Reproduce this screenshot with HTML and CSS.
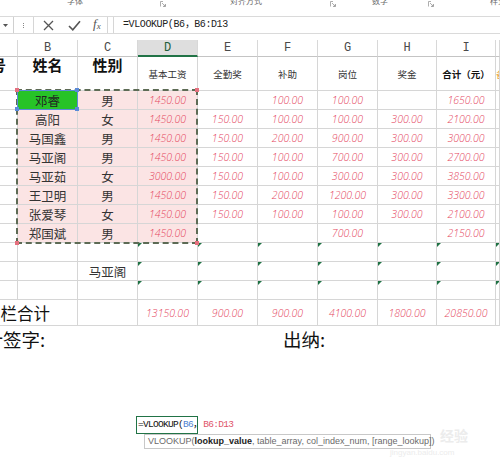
FILE: index.html
```html
<!DOCTYPE html>
<html lang="zh-CN">
<head>
<meta charset="utf-8">
<title>VLOOKUP</title>
<link rel="stylesheet" href="styles.css">
</head>
<body>
<div class="ribbon">
  <span class="rl g1">字体</span>
  <span class="lnch k1"><svg width="6" height="6" viewBox="0 0 6 6"><path d="M0.5 5.5V0.5H3M5.5 3V5.5H3M2 2L5.2 5.2M5.2 3.6V5.2H3.6" fill="none" stroke="#9a9a9a" stroke-width="0.8"/></svg></span>
  <span class="rl g2">对齐方式</span>
  <span class="lnch k2"><svg width="6" height="6" viewBox="0 0 6 6"><path d="M0.5 5.5V0.5H3M5.5 3V5.5H3M2 2L5.2 5.2M5.2 3.6V5.2H3.6" fill="none" stroke="#9a9a9a" stroke-width="0.8"/></svg></span>
  <span class="rl g3">数字</span>
  <span class="lnch k3"><svg width="6" height="6" viewBox="0 0 6 6"><path d="M0.5 5.5V0.5H3M5.5 3V5.5H3M2 2L5.2 5.2M5.2 3.6V5.2H3.6" fill="none" stroke="#9a9a9a" stroke-width="0.8"/></svg></span>
  <span class="rl g4">样式</span>
</div>

<div class="fbar">
  <div class="namebox"><svg width="5" height="3" viewBox="0 0 5 3"><path d="M0 0H5L2.5 3Z" fill="#555"/></svg></div>
  <div class="grip"><i></i><i></i><i></i></div>
  <div class="fxbox">
    <svg class="ic" width="11" height="11" viewBox="0 0 11 11"><path d="M1 1L10 10M10 1L1 10" stroke="#555" stroke-width="1.3" fill="none"/></svg>
    <svg class="ic" width="13" height="11" viewBox="0 0 13 11"><path d="M1 6L4.8 9.8L12 1.2" stroke="#555" stroke-width="1.6" fill="none"/></svg>
    <span class="fx">f<sub>x</sub></span>
  </div>
  <div class="finput">=VLOOKUP(B6，B6:D13</div>
</div>

<div class="sheet">
  <!-- column headers -->
  <div class="h"></div>
  <div class="h">B</div>
  <div class="h">C</div>
  <div class="h sel">D</div>
  <div class="h">E</div>
  <div class="h">F</div>
  <div class="h">G</div>
  <div class="h">H</div>
  <div class="h">I</div>
  <div class="h"></div>

  <!-- title row -->
  <div class="c big cut">号</div>
  <div class="c big">姓名</div>
  <div class="c big">性别</div>
  <div class="c sm">基本工资</div>
  <div class="c sm">全勤奖</div>
  <div class="c sm">补助</div>
  <div class="c sm">岗位</div>
  <div class="c sm">奖金</div>
  <div class="c sm b">合计（元）</div>
  <div class="c sm or">备</div>

  <!-- data -->
  <div class="c"></div>
  <div class="c nm green">邓睿</div>
  <div class="c pk nm">男</div>
  <div class="c pk n">1450.00</div>
  <div class="c n"></div>
  <div class="c n">100.00</div>
  <div class="c n">100.00</div>
  <div class="c n"></div>
  <div class="c n">1650.00</div>
  <div class="c"></div>

  <div class="c"></div>
  <div class="c pk nm">高阳</div>
  <div class="c pk nm">女</div>
  <div class="c pk n">1450.00</div>
  <div class="c n">150.00</div>
  <div class="c n">100.00</div>
  <div class="c n">100.00</div>
  <div class="c n">300.00</div>
  <div class="c n">2100.00</div>
  <div class="c"></div>

  <div class="c"></div>
  <div class="c pk nm">马国鑫</div>
  <div class="c pk nm">男</div>
  <div class="c pk n">1450.00</div>
  <div class="c n">150.00</div>
  <div class="c n">200.00</div>
  <div class="c n">900.00</div>
  <div class="c n">300.00</div>
  <div class="c n">3000.00</div>
  <div class="c"></div>

  <div class="c"></div>
  <div class="c pk nm">马亚阁</div>
  <div class="c pk nm">男</div>
  <div class="c pk n">1450.00</div>
  <div class="c n">150.00</div>
  <div class="c n">100.00</div>
  <div class="c n">700.00</div>
  <div class="c n">300.00</div>
  <div class="c n">2700.00</div>
  <div class="c"></div>

  <div class="c"></div>
  <div class="c pk nm">马亚茹</div>
  <div class="c pk nm">女</div>
  <div class="c pk n">3000.00</div>
  <div class="c n">150.00</div>
  <div class="c n">100.00</div>
  <div class="c n">300.00</div>
  <div class="c n">300.00</div>
  <div class="c n">3850.00</div>
  <div class="c"></div>

  <div class="c"></div>
  <div class="c pk nm">王卫明</div>
  <div class="c pk nm">男</div>
  <div class="c pk n">1450.00</div>
  <div class="c n">150.00</div>
  <div class="c n">200.00</div>
  <div class="c n">1200.00</div>
  <div class="c n">300.00</div>
  <div class="c n">3300.00</div>
  <div class="c"></div>

  <div class="c"></div>
  <div class="c pk nm">张爱琴</div>
  <div class="c pk nm">女</div>
  <div class="c pk n">1450.00</div>
  <div class="c n">150.00</div>
  <div class="c n">100.00</div>
  <div class="c n">100.00</div>
  <div class="c n">300.00</div>
  <div class="c n">2100.00</div>
  <div class="c"></div>

  <div class="c"></div>
  <div class="c pk nm">郑国斌</div>
  <div class="c pk nm">男</div>
  <div class="c pk n">1450.00</div>
  <div class="c n"></div>
  <div class="c n"></div>
  <div class="c n">700.00</div>
  <div class="c n"></div>
  <div class="c n">2150.00</div>
  <div class="c"></div>

  <!-- empty rows -->
  <div class="c"></div>
  <div class="c"></div>
  <div class="c"></div>
  <div class="c e"></div>
  <div class="c e"></div>
  <div class="c e"></div>
  <div class="c e"></div>
  <div class="c e"></div>
  <div class="c e"></div>
  <div class="c e"></div>

  <div class="c"></div>
  <div class="c"></div>
  <div class="c nm">马亚阁</div>
  <div class="c e"></div>
  <div class="c e"></div>
  <div class="c e"></div>
  <div class="c e"></div>
  <div class="c e"></div>
  <div class="c e"></div>
  <div class="c e"></div>

  <div class="c"></div>
  <div class="c"></div>
  <div class="c"></div>
  <div class="c e"></div>
  <div class="c e"></div>
  <div class="c e"></div>
  <div class="c e"></div>
  <div class="c e"></div>
  <div class="c e"></div>
  <div class="c e"></div>

  <!-- total row -->
  <div class="c total span2"><span class="tl">本栏合计</span></div>
  <div class="c"></div>
  <div class="c n">13150.00</div>
  <div class="c n">900.00</div>
  <div class="c n">900.00</div>
  <div class="c n">4100.00</div>
  <div class="c n">1800.00</div>
  <div class="c n">20850.00</div>
  <div class="c"></div>

  <!-- overlays: copy marquee and reference handles -->
  <div class="marquee"></div>
  <div class="refbox"></div>
  <span class="dot red d1"></span>
  <span class="dot red d2"></span>
  <span class="dot red d3"></span>
  <span class="dot red d4"></span>
  <span class="dot blue d5"></span>
  <span class="dot blue d6"></span>
  <span class="dot blue d7"></span>
</div>

<div class="sign">
  <div class="s1"><span class="st">会计签字:</span></div>
  <div class="s2">出纳:</div>
</div>

<div class="editor">=VLOOKUP(<span class="rb">B6</span>，<span class="rr">B6:D13</span></div>
<div class="tip">VLOOKUP(<b>lookup_value</b>, table_array, col_index_num, [range_lookup])</div>

<div class="wm">
  <span class="wt">经验</span>
  <span class="wu">jingyan.baidu.com</span>
</div>
</body>
</html>
```

FILE: styles.css
```css
* { box-sizing: border-box; margin: 0; padding: 0; }
html, body { width: 500px; height: 471px; overflow: hidden; background: #fff; }
body {
  font-family: "Noto Sans CJK SC", "Noto Sans", sans-serif;
  color: #333;
  position: relative;
}

/* ribbon group labels (cut off at top) */
.ribbon {
  height: 17px;
  border-bottom: 1px solid #dadada;
  display: flex;
  align-items: flex-start;
  overflow: hidden;
}
.rl { font-size: 8px; line-height: 10px; margin-top: -4px; color: #6a6a6a; white-space: nowrap; }
.lnch { display: block; width: 6px; height: 6px; margin-top: 1px; }
.lnch svg { display: block; }
.g1 { margin-left: 67px; }
.k1 { margin-left: 77px; }
.g2 { margin-left: 64px; }
.k2 { margin-left: 68px; }
.g3 { margin-left: 36px; }
.k3 { margin-left: 40px; }
.g4 { margin-left: 56px; }

/* formula bar */
.fbar {
  height: 17px;
  border-bottom: 1px solid #dadada;
  display: flex;
  align-items: stretch;
}
.namebox {
  width: 14px;
  border-right: 1px solid #d0d0d0;
  display: flex;
  align-items: center;
  justify-content: center;
  padding-right: 2px;
}
.namebox svg { display: block; }
.grip {
  width: 19px;
  display: flex;
  flex-direction: column;
  align-items: center;
  justify-content: center;
  gap: 1px;
}
.grip i { display: block; width: 1px; height: 1px; background: #888; }
.fxbox {
  width: 75px;
  border-left: 1px solid #d6d6d6;
  border-right: 1px solid #d6d6d6;
  display: flex;
  align-items: center;
  padding-left: 9px;
  gap: 14px;
}
.ic { display: block; }
.fx {
  font-family: "Liberation Serif", serif;
  font-style: italic;
  font-size: 13px;
  line-height: 13px;
  color: #555;
  margin-left: -2px;
}
.fx sub { font-size: 9px; vertical-align: -1px; }
.finput {
  flex: 1;
  margin-left: 5px;
  border-left: 1px solid #d6d6d6;
  padding-left: 9px;
  font-family: "Liberation Mono", monospace;
  font-size: 10px;
  letter-spacing: -0.4px;
  line-height: 16px;
  color: #222;
  white-space: nowrap;
}

/* sheet */
.sheet {
  position: relative;
  margin-top: 6px;
  display: grid;
  grid-template-columns: 18px repeat(6, 60px) 59px 59px 4px;
  grid-template-rows: 17px 34px repeat(8, 19px) 19px 19px 19px 26px;
  overflow: hidden;
}
.h {
  border-right: 1px solid #d8d8d8;
  border-bottom: 1px solid #c4c4c4;
  display: flex;
  align-items: center;
  justify-content: center;
  font-family: "Liberation Mono", monospace;
  font-size: 12px;
  color: #4a4a4a;
}
.h.sel {
  background: #dedede;
  border-bottom: 2px solid #217346;
  color: #1e5e3a;
}
.c {
  position: relative;
  border-right: 1px solid #d6d6d6;
  border-bottom: 1px solid #d6d6d6;
  display: flex;
  align-items: center;
  justify-content: center;
  white-space: nowrap;
  overflow: hidden;
}
.big {
  align-items: flex-start;
  font-size: 15px;
  line-height: 15px;
  font-weight: 700;
  color: #111;
}
.cut { justify-content: flex-end; padding-right: 11px; overflow: hidden; }
.sm { font-size: 9.5px; color: #333; }
.b { font-weight: 700; color: #111; }
.or { justify-content: flex-start; color: #e9a23b; font-size: 9.5px; }
.nm { font-size: 12.5px; color: #333; }
.pk { background: #fbe4e4; }
.green { background: #27c327; color: #222; }
.n {
  font-family: "Open Sans", "Lato", sans-serif;
  font-style: italic;
  font-weight: 300;
  font-size: 10.5px;
  color: #e5485f;
}
.e::before {
  content: "";
  position: absolute;
  left: 0;
  top: 0;
  border-top: 4px solid #1f7244;
  border-right: 4px solid transparent;
}
.span2 { grid-column: span 2; }
.total { justify-content: flex-start; font-size: 16.5px; color: #111; }
.tl { margin-left: -16px; }

/* overlays */
.marquee {
  position: absolute;
  left: 16px;
  top: 49px;
  width: 182px;
  height: 155px;
  border: 2px dashed #5d6b55;
}
.refbox {
  position: absolute;
  left: 17px;
  top: 50px;
  width: 61px;
  height: 20px;
  border: 1px solid #5b8ad8;
}
.dot { position: absolute; width: 4px; height: 4px; }
.red { background: #e5707f; }
.blue { background: #5b8ad8; }
.d1 { left: 15px; top: 48px; }
.d2 { left: 195px; top: 48px; }
.d3 { left: 15px; top: 201px; }
.d4 { left: 195px; top: 201px; }
.d5 { left: 75px; top: 48px; }
.d6 { left: 15px; top: 67px; }
.d7 { left: 75px; top: 67px; }

/* signature row */
.sign {
  height: 26px;
  display: grid;
  grid-template-columns: 283px auto;
  align-items: center;
  font-size: 18.5px;
  line-height: 22px;
  color: #111;
  white-space: nowrap;
}
.st { display: inline-block; margin-left: -34px; }

/* in-cell editor and tooltip */
.editor {
  margin: 64px 0 0 136px;
  width: 62px;
  height: 18px;
  border: 1px solid #217346;
  padding-left: 1px;
  font-family: "Liberation Mono", monospace;
  font-size: 9.5px;
  letter-spacing: -0.7px;
  line-height: 16px;
  color: #111;
  white-space: nowrap;
  overflow: visible;
}
.rb { color: #4f7fd0; }
.rr { color: #e0566a; margin-left: 1px; }
.tip {
  margin-left: 144px;
  width: 287px;
  height: 15px;
  border: 1px solid #c8c8c8;
  padding-left: 3px;
  font-family: "Liberation Sans", sans-serif;
  font-size: 9px;
  line-height: 13px;
  color: #6a6a6a;
  white-space: nowrap;
}
.tip b { color: #222; }

/* watermark */
.wm {
  position: absolute;
  left: 436px;
  top: 426px;
  width: 60px;
  height: 34px;
  color: #ececec;
}
.wt { position: absolute; left: 4px; top: 0; font-size: 14px; line-height: 18px; font-weight: 700; }
.wu { position: absolute; left: -46px; top: 22px; font-family: "Liberation Sans", sans-serif; font-size: 8px; line-height: 10px; }
```
